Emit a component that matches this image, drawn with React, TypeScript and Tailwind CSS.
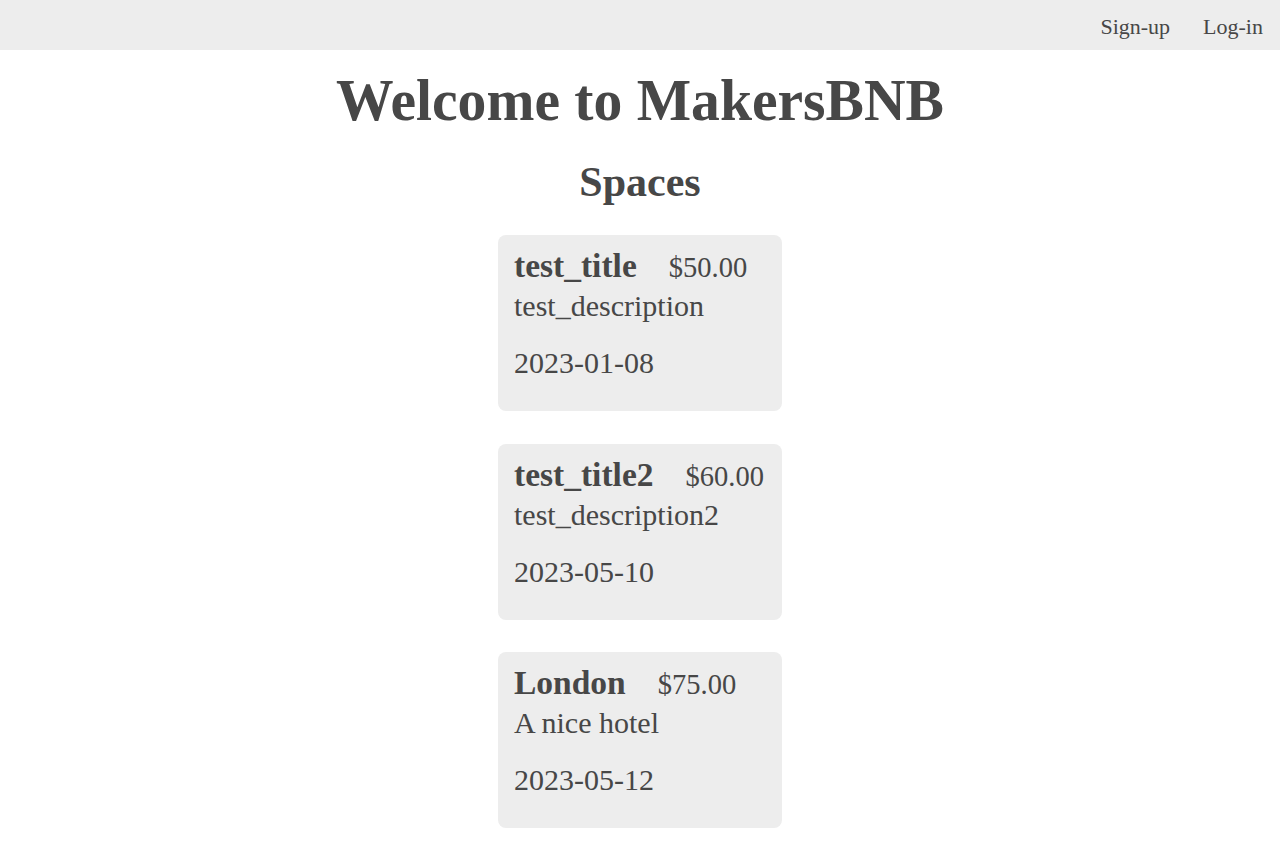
import React from "react";

const spaces = [
  { title: "test_title", price: "$50.00", description: "test_description", date: "2023-01-08" },
  { title: "test_title2", price: "$60.00", description: "test_description2", date: "2023-05-10" },
  { title: "London", price: "$75.00", description: "A nice hotel", date: "2023-05-12" },
];

export default function App() {
  return (
    <div className="min-h-[861px] bg-white text-[#474747]" style={{ fontFamily: '"Liberation Serif", "Times New Roman", serif' }}>
      <nav className="h-[50px] bg-[#ededed] flex items-start justify-end pr-[17px] pt-[14px] gap-[33px] text-[22px] leading-[26px]">
        <a>Sign-up</a>
        <a>Log-in</a>
      </nav>
      <h1 className="text-center font-bold text-[60px] leading-[60px] mt-[20px] scale-x-[0.96]">Welcome to MakersBNB</h1>
      <h2 className="text-center font-bold text-[42px] leading-[48px] mt-[28px]">Spaces</h2>
      <div className="flex flex-col items-center gap-[32.5px] mt-[29px]">
        {spaces.map((s) => (
          <div key={s.title} className="w-[284px] h-[176px] bg-[#ededed] rounded-[8px] px-[16px] pt-[11px]">
            <div className="flex items-baseline gap-[32px] h-[40px]">
              <span className="font-bold text-[33.5px] leading-[40px]">{s.title}</span>
              <span className="text-[28.5px] leading-[40px]">{s.price}</span>
            </div>
            <p className="text-[30px] leading-[40px]">{s.description}</p>
            <p className="text-[30px] leading-[40px] mt-[17px]">{s.date}</p>
          </div>
        ))}
      </div>
    </div>
  );
}
